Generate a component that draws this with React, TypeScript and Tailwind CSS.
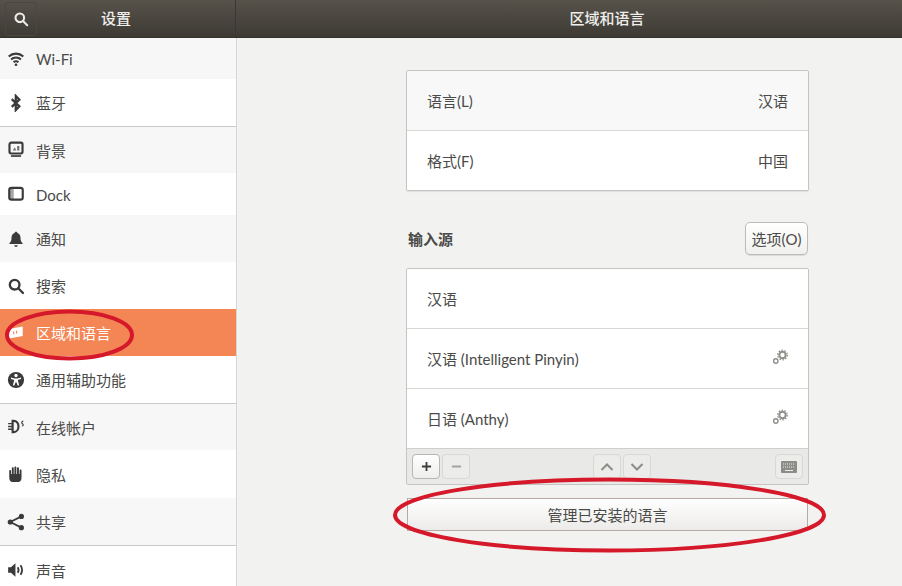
import React from "react";

const font = { fontFamily: 'Lato,"Noto Sans CJK SC",sans-serif' };

const P = ({ d }: { d: string }) => <path d={d} fill="currentColor" />;

const icons: Record<string, React.ReactNode> = {
  wifi: (
    <g fill="none" stroke="currentColor" strokeWidth="1.8">
      <path d="M1.500 5.700C5.200 2.400 10.800 2.400 14.500 5.700" />
      <path d="M3.600 8.300C6.200 6.200 9.800 6.200 12.400 8.300" />
      <path d="M5.800 10.700C7.200 9.800 8.800 9.800 10.200 10.700" />
      <circle cx="8" cy="13.100" r="1.200" fill="currentColor" stroke="none" />
    </g>
  ),
  bt: <path d="M4.200 4.500 11 11 7.800 14.300V1.700L11 5 4.200 11.500" fill="none" stroke="currentColor" strokeWidth="2" />,
  bg: (
    <g>
      <rect x="2.200" y="1.500" width="11.600" height="9.600" rx="1.500" fill="none" stroke="currentColor" strokeWidth="1.900" />
      <rect x="3.500" y="12.600" width="9" height="1.500" fill="currentColor" />
      <path d="M5 8.500 7 5.500 8.200 8.500ZM9 8.500V4.500H11V8.500Z" fill="currentColor" opacity="0.7" />
    </g>
  ),
  dock: (
    <g>
      <rect x="2" y="2.500" width="12" height="10.500" rx="2" fill="none" stroke="currentColor" strokeWidth="1.900" />
      <rect x="2.500" y="3" width="3.500" height="9.500" fill="currentColor" opacity="0.45" />
    </g>
  ),
  bell: <P d="M8 1.500c.7 0 1.200.5 1.200 1.100C11.300 3.200 12 5 12 7c0 2.200.6 3.600 1.800 4.600V12.500H2.200v-.9C3.400 10.600 4 9.200 4 7c0-2 .7-3.800 2.800-4.400C6.800 2 7.300 1.500 8 1.500ZM6.400 13.500h3.200C9.400 14.400 8.800 15 8 15s-1.400-.6-1.600-1.500Z" />,
  search: (
    <g fill="none" stroke="currentColor" strokeWidth="2.100">
      <circle cx="6.800" cy="6.800" r="4.300" />
      <path d="M10 10 14.200 14.200" strokeLinecap="round" />
    </g>
  ),
  region: (
    <g>
      <path d="M3 4.200 14 2.200V10.600L2 12.800C1.300 12.900 1 12.500 1 12V6C1 5 2 4.400 3 4.200Z" fill="currentColor" />
      <path d="M6 9V6.500M8.500 8.500V6" stroke="#f48655" strokeWidth="1" />
    </g>
  ),
  a11y: (
    <g>
      <circle cx="8" cy="8" r="7.200" fill="currentColor" />
      <circle cx="8" cy="4" r="1.500" fill="#fff" />
      <path d="M3.500 5.800 7 6.600H9L12.500 5.800V7L9.600 7.900 10.800 12.800H9.500L8 9.400 6.500 12.800H5.200L6.400 7.900 3.500 7Z" fill="#fff" />
    </g>
  ),
  online: (
    <g fill="none" stroke="currentColor">
      <path d="M5 2.500H6C8.500 2.500 10.200 4.800 10.200 7.500S8.500 12.500 6 12.500H5Z" strokeWidth="1.900" />
      <path d="M1 5H5M1 10H5M1 7.500H5" strokeWidth="1.300" />
      <path d="M14.500 2.800C12.800 2.800 12.800 4.600 13.700 5.100S15 7.100 13.200 7.100" strokeWidth="1" />
    </g>
  ),
  hand: <P d="M2 5.500c0-1.300 1.600-1.300 1.600 0V8H4.300V3c0-1.300 1.700-1.300 1.700 0V8h.6V2.200c0-1.300 1.700-1.300 1.700 0V8h.6V3c0-1.300 1.700-1.300 1.700 0V8h.6V5c0-1.300 1.700-1.300 1.700 0v6c0 2.500-1 4-3 4H5c-2 0-3-1.500-3-4Z" />,
  share: (
    <g>
      <circle cx="2.900" cy="8" r="2.300" fill="currentColor" />
      <circle cx="12.800" cy="3" r="2.300" fill="currentColor" />
      <circle cx="12.800" cy="13" r="2.300" fill="currentColor" />
      <path d="M2.900 8 12.800 3M2.900 8 12.800 13" stroke="currentColor" strokeWidth="1.600" />
    </g>
  ),
  sound: (
    <g>
      <path d="M1 5.500H3.500L7.500 2V14L3.500 10.500H1Z" fill="currentColor" />
      <path d="M9.500 5.500C10.500 7 10.500 9 9.500 10.500M12 3.800C13.700 6.300 13.700 9.700 12 12.200" fill="none" stroke="currentColor" strokeWidth="1.600" />
    </g>
  ),
};

const Icon = ({ name, className }: { name: string; className?: string }) => (
  <svg viewBox="0 0 16 16" className={className ?? "w-[18px] h-[18px]"}>
    {icons[name]}
  </svg>
);

const Gear = () => (
  <svg viewBox="0 0 16 16" className="w-4 h-4 text-[#8f8f8a]">
    <circle cx="10.500" cy="6" r="3.200" fill="none" stroke="currentColor" strokeWidth="2" />
    <circle cx="10.500" cy="6" r="4.800" fill="none" stroke="currentColor" strokeWidth="1.300" strokeDasharray="1.500 1.500" />
    <circle cx="3.800" cy="12" r="2.200" fill="none" stroke="currentColor" strokeWidth="1.400" />
  </svg>
);

const rows = [
  { icon: "wifi", t: "Wi-Fi", h: "h-[41px]", bg: "bg-[#f7f7f7]" },
  { icon: "bt", t: "蓝牙", h: "h-[47px]", bg: "bg-white", sep: true },
  { icon: "bg", t: "背景", h: "h-[46px]", bg: "bg-[#f7f7f7]" },
  { icon: "dock", t: "Dock", h: "h-[42px]", bg: "bg-white" },
  { icon: "bell", t: "通知", h: "h-[47px]", bg: "bg-[#f7f7f7]" },
  { icon: "search", t: "搜索", h: "h-[47px]", bg: "bg-white" },
  { icon: "region", t: "区域和语言", h: "h-[47px]", bg: "bg-[#f48655]", active: true },
  { icon: "a11y", t: "通用辅助功能", h: "h-[47px]", bg: "bg-white", sep: true },
  { icon: "online", t: "在线帐户", h: "h-[46px]", bg: "bg-[#f7f7f7]" },
  { icon: "hand", t: "隐私", h: "h-[48px]", bg: "bg-white" },
  { icon: "share", t: "共享", h: "h-[47px]", bg: "bg-[#f7f7f7]", sep: true },
  { icon: "sound", t: "声音", h: "h-[48px]", bg: "bg-white" },
];

const ToolBtn = ({ children, on }: { children: React.ReactNode; on?: boolean }) => (
  <div
    className={`w-[28px] h-[25px] rounded-[4px] border flex items-center justify-center ${
      on ? "border-[#b9b7b2] bg-gradient-to-b from-white to-[#eeeeec] text-[#3d3d3d]" : "border-[#d8d8d5] bg-[#ececea] text-[#a3a3a0]"
    }`}
  >
    {children}
  </div>
);

const Txt = ({ children, className }: { children: React.ReactNode; className?: string }) => (
  <span className={`mt-[2px] ${className ?? ""}`}>{children}</span>
);

const SourceRow = ({ t, gear, last }: { t: string; gear?: boolean; last?: boolean }) => (
  <div className={`${last ? "h-[59px]" : "h-[60px] border-b border-[#d8d8d6]"} flex items-center justify-between pl-[20px] pr-[20px] bg-white`}>
    <Txt>{t}</Txt>
    {gear && (
      <span className="-mt-[4px]">
        <Gear />
      </span>
    )}
  </div>
);

export default function App() {
  return (
    <div className="relative w-[902px] h-[586px] overflow-hidden bg-[#f2f2f0] text-[15px] text-[#4a4a48]" style={font}>
      <header className="flex h-[38px] bg-gradient-to-b from-[#57534b] to-[#3d3a34] border-b border-[#34322d] text-[#efeeea]">
        <div className="w-[236px] flex items-center relative border-r border-[#3a3833]">
          <div className="ml-[5px] w-[32px] h-[34px] rounded-[3px] border border-[#4a4740] flex items-center justify-center">
            <Icon name="search" className="w-[16px] h-[16px] text-[#ecebe7]" />
          </div>
          <span className="absolute left-[101px] font-medium">设置</span>
        </div>
        <div className="flex-1 flex items-center justify-center pl-[76px] font-medium">区域和语言</div>
      </header>

      <div className="flex h-[548px]">
        <nav className="w-[237px] shrink-0 border-r border-[#d6d6d4] bg-white overflow-hidden">
          {rows.map((r) => (
            <div key={r.t} className={`${r.sep ? "border-b border-[#c9c9c7]" : ""}`}>
              <div className={`${r.h} ${r.bg} flex items-center pl-[7px] ${r.active ? "text-white" : "text-[#4a4a48]"}`}>
                <span className={r.active ? "text-white" : "text-[#3a3a3a]"}>
                  <Icon name={r.icon} />
                </span>
                <Txt className="ml-[11px]">{r.t}</Txt>
              </div>
            </div>
          ))}
        </nav>

        <main className="flex-1 pl-[169px] pt-[32px]">
          <div className="w-[403px]">
            <section className="border border-[#c4c4c2] rounded-[2px] overflow-hidden h-[121px] shadow-[0_1px_1px_rgba(0,0,0,0.08)]">
              <div className="h-[60px] bg-[#f8f8f8] border-b border-[#d8d8d6] flex items-center justify-between pl-[20px] pr-[20px]">
                <Txt>语言(L)</Txt>
                <Txt>汉语</Txt>
              </div>
              <div className="h-[59px] bg-white flex items-center justify-between pl-[20px] pr-[20px]">
                <Txt>格式(F)</Txt>
                <Txt>中国</Txt>
              </div>
            </section>

            <div className="flex items-center justify-between h-[33px] mt-[31px] pl-[2px] pr-[1px]">
              <Txt className="font-bold">输入源</Txt>
              <div className="w-[63px] h-[33px] border border-[#bdbcb8] rounded-[5px] bg-gradient-to-b from-white to-[#f0f0ee] flex items-center justify-center shadow-[0_1px_1px_rgba(0,0,0,0.1)]">
                <Txt>选项(O)</Txt>
              </div>
            </div>

            <section className="mt-[13px] border border-[#c4c4c2] rounded-[2px] overflow-hidden">
              <SourceRow t="汉语" />
              <SourceRow t="汉语 (Intelligent Pinyin)" gear />
              <SourceRow t="日语 (Anthy)" gear last />
              <div className="h-[36px] bg-[#e9e9e7] border-t border-[#cfcfcd] flex items-center justify-between pl-[5px] pr-[5px]">
                <div className="flex gap-[2px]">
                  <ToolBtn on>
                    <svg viewBox="0 0 12 12" className="w-[11px] h-[11px]">
                      <path d="M6 1V11M1 6H11" stroke="currentColor" strokeWidth="2" />
                    </svg>
                  </ToolBtn>
                  <ToolBtn>
                    <svg viewBox="0 0 12 12" className="w-[11px] h-[11px]">
                      <path d="M1 6H11" stroke="currentColor" strokeWidth="2" />
                    </svg>
                  </ToolBtn>
                </div>
                <div className="flex gap-[2px] ml-[-1px]">
                  <ToolBtn>
                    <svg viewBox="0 0 14 10" className="w-[14px] h-[10px] text-[#8c8c88]">
                      <path d="M1.500 8 7 2.500 12.500 8" fill="none" stroke="currentColor" strokeWidth="2" />
                    </svg>
                  </ToolBtn>
                  <ToolBtn>
                    <svg viewBox="0 0 14 10" className="w-[14px] h-[10px] text-[#8c8c88]">
                      <path d="M1.500 2 7 7.500 12.500 2" fill="none" stroke="currentColor" strokeWidth="2" />
                    </svg>
                  </ToolBtn>
                </div>
                <ToolBtn>
                  <svg viewBox="0 0 16 12" className="w-[16px] h-[12px] text-[#8c8c88]">
                    <rect width="16" height="12" rx="1" fill="currentColor" />
                    <path d="M2 3H14M2 6H14" stroke="#ececea" strokeWidth="1" strokeDasharray="1 1" />
                    <path d="M4 9.500H12" stroke="#ececea" strokeWidth="1" />
                  </svg>
                </ToolBtn>
              </div>
            </section>

            <div className="mt-[13px] ml-[1px] w-[401px] h-[33px] border border-[#b9a9a3] bg-gradient-to-b from-white to-[#ecebe9] flex items-center justify-center">
              <Txt>管理已安装的语言</Txt>
            </div>
          </div>
        </main>
      </div>

      <svg className="absolute left-0 top-0 w-[902px] h-[586px] pointer-events-none" viewBox="0 0 902 586" fill="none">
        <ellipse cx="69.500" cy="335" rx="62.500" ry="23.500" stroke="#d5182a" strokeWidth="4" />
        <ellipse cx="609.500" cy="515" rx="214.500" ry="35.500" stroke="#d5182a" strokeWidth="4" />
      </svg>
    </div>
  );
}
